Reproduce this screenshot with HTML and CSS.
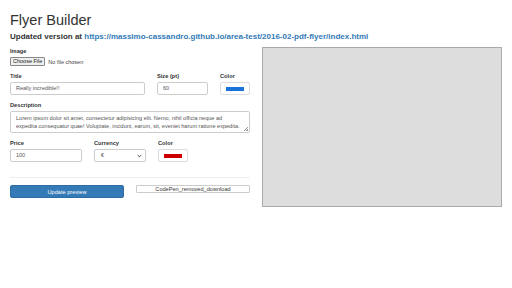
FILE: index.html
```html
<!DOCTYPE html>
<html lang="en">
<head>
    <meta charset="UTF-8">
    <title>Flyer Builder</title>
    <link rel="stylesheet" href="styles.css">
</head>
<body>
    <h1 class="title">Flyer Builder</h1>
    <h3 class="subtitle">Updated version at <a href="#">https://massimo-cassandro.github.io/area-test/2016-02-pdf-flyer/index.html</a></h3>
    <div class="layout">
        <form class="builder">
            <div class="field">
                <label>Image</label>
                <div class="file">
                    <span class="file-btn">Choose File</span>
                    <span class="file-name">No file chosen</span>
                </div>
            </div>
            <div class="row row-title">
                <div class="field">
                    <label>Title</label>
                    <div class="input">Really incredible!!</div>
                </div>
                <div class="field">
                    <label>Size (pt)</label>
                    <div class="input">60</div>
                </div>
                <div class="field">
                    <label>Color</label>
                    <div class="swatch"><span class="blue"></span></div>
                </div>
            </div>
            <div class="field">
                <label>Description</label>
                <div class="textarea">Lorem ipsum dolor sit amet, consectetur adipisicing elit. Nemo, nihil officia neque ad<br>expedita consequatur quae! Voluptate, incidunt, earum, sit, eveniet harum ratione expedita.</div>
            </div>
            <div class="row row-price">
                <div class="field">
                    <label>Price</label>
                    <div class="input">100</div>
                </div>
                <div class="field">
                    <label>Currency</label>
                    <div class="input select">€ <svg width="5" height="4" viewBox="0 0 5 4"><path d="M0.7 1 L2.5 2.8 L4.3 1" fill="none" stroke="#333" stroke-width="0.9"/></svg></div>
                </div>
                <div class="field">
                    <label>Color</label>
                    <div class="swatch"><span class="red"></span></div>
                </div>
            </div>
            <hr>
            <div class="actions">
                <button type="button" class="btn-primary">Update preview</button>
                <div><button type="button" class="btn-plain">CodePen_removed_download</button></div>
            </div>
        </form>
        <div class="preview"></div>
    </div>
</body>
</html>
```

FILE: styles.css
```css
body {
    font-family: 'Liberation Sans', Arial, sans-serif;
    margin: 0;
    padding: 0 10px;
    color: #333;
    background: #fff;
    font-size: 6px;
}
.title {
    font-size: 14.5px;
    font-weight: 400;
    margin: 11px 0 0;
    line-height: 18px;
}
.subtitle {
    font-size: 8px;
    font-weight: 700;
    margin: 3px 0 0;
    line-height: 10px;
}
.subtitle a {
    color: #337ab7;
    text-decoration: none;
}
.layout {
    display: flex;
    gap: 12px;
    margin-top: 5px;
}
.builder {
    width: 240px;
}
.preview {
    width: 238px;
    height: 158px;
    background: #ddd;
    border: 1px solid #aaa;
}
label {
    display: block;
    font-weight: 700;
    font-size: 5.7px;
    line-height: 8px;
    margin-bottom: 2px;
}
.field {
    margin-bottom: 6px;
}
.file {
    display: flex;
    align-items: center;
    gap: 3px;
    height: 9px;
}
.file-btn {
    border: 1px solid #888;
    background: #efefef;
    border-radius: 1px;
    padding: 0 2px;
    line-height: 7px;
    font-size: 5.5px;
    color: #222;
}
.file-name {
    color: #444;
    font-size: 5.5px;
}
.row {
    display: grid;
    gap: 12px;
}
.row-title {
    grid-template-columns: 135px 51px 30px;
}
.row-price {
    grid-template-columns: 72px 52px 30px;
}
.input {
    height: 11px;
    border: 1px solid #ccc;
    border-radius: 2px;
    padding: 0 5px;
    line-height: 11px;
    color: #555;
    font-size: 5.5px;
}
.select {
    display: flex;
    align-items: center;
    justify-content: space-between;
    padding: 0 3px 0 6px;
}
.swatch {
    width: 28px;
    height: 11px;
    border: 1px solid #ddd;
    border-radius: 2px;
    display: flex;
    align-items: center;
    justify-content: center;
}
.swatch span {
    width: 18px;
    height: 4px;
}
.blue {
    background: #1a73d9;
}
.red {
    background: #c00;
}
.textarea {
    position: relative;
    height: 18px;
    border: 1px solid #ccc;
    border-radius: 2px;
    padding: 2px 4px 0 5px;
    color: #555;
    font-size: 5.55px;
    line-height: 8px;
    white-space: nowrap;
    overflow: hidden;
    margin-bottom: 1px;
}
.textarea::after {
    content: '';
    position: absolute;
    right: 1px;
    bottom: 1px;
    width: 4px;
    height: 4px;
    background: linear-gradient(135deg, transparent 45%, #999 45%, #999 58%, transparent 58%, transparent 75%, #999 75%);
}
hr {
    border: 0;
    border-top: 1px solid #eee;
    margin: 9px 0 7px;
}
.actions {
    display: grid;
    grid-template-columns: 114px 114px;
    gap: 12px;
}
.btn-primary {
    height: 13px;
    background: #337ab7;
    border: 1px solid #2e6da4;
    border-radius: 2px;
    color: #fff;
    font-family: inherit;
    font-size: 5.6px;
    padding: 0;
}
.btn-plain {
    display: block;
    width: 100%;
    height: 8px;
    background: #fff;
    border: 1px solid #ccc;
    border-radius: 1px;
    color: #333;
    font-family: inherit;
    font-size: 5.6px;
    line-height: 6px;
    padding: 0;
}
```
